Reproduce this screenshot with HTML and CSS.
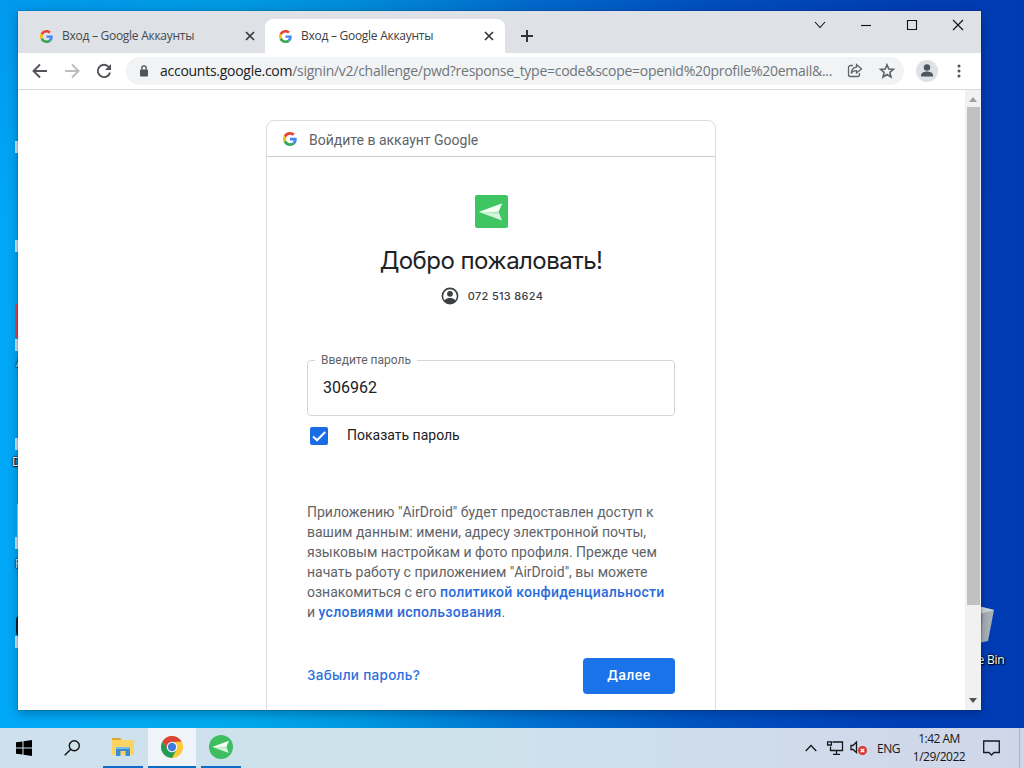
FILE: index.html
```html
<!DOCTYPE html>
<html lang="ru">
<head>
<meta charset="utf-8">
<title>Вход – Google Аккаунты</title>
<link rel="stylesheet" href="styles.css">
</head>
<body>
<svg class="defs" width="0" height="0" aria-hidden="true">
  <symbol id="google" viewBox="0 0 48 48">
    <path fill="#ea4335" d="M24 9.5c3.54 0 6.71 1.22 9.21 3.6l6.85-6.85C35.9 2.38 30.47 0 24 0 14.62 0 6.51 5.38 2.56 13.22l7.98 6.19C12.43 13.72 17.74 9.5 24 9.5z"/>
    <path fill="#4285f4" d="M46.98 24.55c0-1.57-.15-3.09-.38-4.55H24v9.02h12.94c-.58 2.96-2.26 5.48-4.78 7.18l7.73 6c4.51-4.18 7.09-10.36 7.09-17.65z"/>
    <path fill="#fbbc05" d="M10.53 28.59c-.48-1.45-.76-2.99-.76-4.59s.27-3.14.76-4.59l-7.98-6.19C.92 16.46 0 20.12 0 24s.92 7.54 2.56 10.78l7.97-6.19z"/>
    <path fill="#34a853" d="M24 48c6.48 0 11.93-2.13 15.89-5.81l-7.73-6c-2.15 1.45-4.92 2.3-8.16 2.3-6.26 0-11.57-4.22-13.47-9.91l-7.98 6.19C6.51 42.62 14.62 48 24 48z"/>
  </symbol>
  <symbol id="plane" viewBox="0 0 24 24">
    <path fill="#d4f5da" d="M0 12 23 3.500 19.500 11.500 23 20.500z"/>
    <path fill="#f4fff6" d="M0 12 23 3.500 19.500 11.500z"/>
    <path fill="#b4ebc0" d="M4 13 19.500 11.500 20.300 14z"/>
  </symbol>
</svg>
<div class="desktop">
  <div class="shortcut" style="top:141px"></div>
  <div class="shortcut" style="top:240px"></div>
  <div class="shortcut red" style="top:304px"></div>
  <div class="shortcut" style="top:339px"></div>
  <div class="shortcut" style="top:438px"></div>
  <div class="shortcut thin" style="top:504px"></div>
  <div class="shortcut" style="top:537px"></div>
  <div class="shortcut dark" style="top:616px"></div>
  <div class="shortcut" style="top:636px"></div>
  <span class="desk-label" style="left:16px;top:356px">A</span>
  <span class="desk-label" style="left:12px;top:455px">D</span>
  <span class="desk-label" style="left:15px;top:557px">F</span>
  <svg class="bin" width="24" height="44" viewBox="0 0 24 44"><path fill="#a9b3b5" d="M0 3 20 8 14 39 0 42z"/><path fill="#cfd8da" d="M0 3 20 8 9 11 0 9z"/><path fill="#8e999b" d="M0 11 9 12 7 41 0 42z"/></svg>
  <span class="desk-label bin-label">Recycle Bin</span>

  <main class="window">
    <div class="tabstrip">
      <div class="tab">
        <svg class="fav" width="13" height="13"><use href="#google"/></svg>
        <span class="tab-title">Вход – Google Аккаунты</span>
        <svg width="10" height="10" viewBox="0 0 10 10"><path class="close" d="M1 1 9 9M9 1 1 9"/></svg>
      </div>
      <div class="tab active">
        <svg class="fav" width="13" height="13"><use href="#google"/></svg>
        <span class="tab-title">Вход – Google Аккаунты</span>
        <svg width="10" height="10" viewBox="0 0 10 10"><path class="close" d="M1 1 9 9M9 1 1 9"/></svg>
      </div>
      <svg class="plus" width="12" height="12" viewBox="0 0 12 12"><path d="M6 0V12M0 6H12" stroke="#303338" stroke-width="2"/></svg>
      <div class="controls">
        <svg width="12" height="12" viewBox="0 0 12 12"><path d="M1 3 6 8.500 11 3"/></svg>
        <svg width="12" height="12" viewBox="0 0 12 12"><path d="M1 6.500H11"/></svg>
        <svg width="12" height="12" viewBox="0 0 12 12"><path d="M1.500 1.500H10.500V10.500H1.500z"/></svg>
        <svg width="12" height="12" viewBox="0 0 12 12"><path d="M1 1 11 11M11 1 1 11"/></svg>
      </div>
    </div>
    <div class="toolbar">
      <svg class="nav" width="16" height="16" viewBox="0 0 16 16"><path d="M15 8H2M8 1.500 1.500 8 8 14.500"/></svg>
      <svg class="nav disabled" width="16" height="16" viewBox="0 0 16 16"><path d="M1 8H14M8 1.500 14.500 8 8 14.500"/></svg>
      <svg class="nav" width="16" height="16" viewBox="0 0 16 16"><path d="M12.800 4A6.200 6.200 0 1 0 14 9.500"/><path class="solid" d="M15 1V7H9z"/></svg>
      <div class="omnibox">
        <svg width="10" height="12" viewBox="0 0 10 12"><rect x="1" y="4.500" width="8" height="7" rx="1" fill="#505357"/><path d="M2.800 5V3a2.200 2.200 0 0 1 4.400 0V5" fill="none" stroke="#505357" stroke-width="1.300"/></svg>
        <span class="url"><b>accounts.google.com</b>/signin/v2/challenge/pwd?response_type=code&amp;scope=openid%20profile%20email&amp;...</span>
        <svg class="share" width="16" height="16" viewBox="0 0 16 16"><path d="M6 2.500H3.500a2 2 0 0 0-2 2v7a2 2 0 0 0 2 2h7a2 2 0 0 0 2-2V10M9.500 1.500 14.500 6 9.500 10V7.700C7 7.600 5.400 8.500 4.300 10.500 4.500 7 6.300 4.500 9.500 4.200z"/></svg>
        <svg class="star" width="16" height="16" viewBox="0 0 16 16"><path d="M8 1.700 9.800 6 14.400 6.400 10.900 9.400 12 14 8 11.500 4 14 5.100 9.400 1.600 6.400 6.200 6z"/></svg>
      </div>
      <svg class="avatar" width="22" height="22" viewBox="0 0 22 22"><circle cx="11" cy="11" r="11" fill="#dee1e6"/><circle cx="11" cy="7.500" r="3.200" fill="#50555f"/><path d="M5 16.500V15c0-2.500 4-3.500 6-3.500s6 1 6 3.500v1.500z" fill="#50555f"/></svg>
      <svg class="menu" width="4" height="14" viewBox="0 0 4 14" fill="#505357"><circle cx="2" cy="2" r="1.500"/><circle cx="2" cy="7" r="1.500"/><circle cx="2" cy="12" r="1.500"/></svg>
    </div>
    <div class="viewport">
      <section class="card">
        <header class="card-head"><svg width="14" height="14"><use href="#google"/></svg><span>Войдите в аккаунт Google</span></header>
        <div class="card-body">
          <div class="app-icon"><svg width="24" height="24"><use href="#plane"/></svg></div>
          <h1>Добро пожаловать!</h1>
          <div class="account">
            <svg width="18" height="18" viewBox="0 0 18 18"><circle cx="9" cy="9" r="7.600" fill="none" stroke="#3c4043" stroke-width="1.600"/><circle cx="9" cy="6.800" r="2.900" fill="#3c4043"/><path d="M3.300 13.600C5 11.200 7 11 9 11s4 .2 5.700 2.600C13.500 16 11 17 9 17s-4.500-1-5.700-3.400z" fill="#3c4043"/></svg>
            <span>072 513 8624</span>
          </div>
          <div class="field"><span class="label">Введите пароль</span><span class="value">306962</span></div>
          <div class="check"><svg width="18" height="18" viewBox="0 0 18 18"><rect width="18" height="18" rx="2" fill="#1a6be6"/><path d="M3 9.500 7 13.300 15.200 5" fill="none" stroke="#fff" stroke-width="2"/></svg><span>Показать пароль</span></div>
          <p class="terms">Приложению "AirDroid" будет предоставлен доступ к<br>вашим данным: имени, адресу электронной почты,<br>языковым настройкам и фото профиля. Прежде чем<br>начать работу с приложением "AirDroid", вы можете<br>ознакомиться с его <a>политикой конфиденциальности</a><br>и <a>условиями использования</a>.</p>
          <div class="actions"><span class="forgot">Забыли пароль?</span><span class="next">Далее</span></div>
        </div>
      </section>
      <div class="scrollbar">
        <svg width="8" height="5" viewBox="0 0 8 5"><path d="M0 5 4 0 8 5z" fill="#a0a0a0"/></svg>
        <div class="thumb"></div>
        <svg class="down" width="8" height="5" viewBox="0 0 8 5"><path d="M0 0 4 5 8 0z" fill="#505050"/></svg>
      </div>
    </div>
  </main>

  <footer class="taskbar">
    <div class="task"><svg width="16" height="16" viewBox="0 0 16 16"><path d="M0 2.300 6.500 1.400V7.500H0zM7.500 1.200 16 0V7.500H7.500zM0 8.500H6.500V14.600L0 13.700zM7.500 8.500H16V16L7.500 14.800z"/></svg></div>
    <div class="task"><svg width="16" height="16" viewBox="0 0 16 16" fill="none" stroke="#111" stroke-width="1.400"><circle cx="10.300" cy="5.700" r="5"/><path d="M6.800 9.200.7 15.300"/></svg></div>
    <div class="task open files"><svg width="22" height="20" viewBox="0 0 22 20"><path fill="#e3a82a" d="M0 1H8L10 3H0z"/><path fill="#fbd463" d="M0 3H22V18H0z"/><path fill="#3e8ecf" d="M4 10H18V19H13.500V14H8.500V19H4z"/><path fill="#77bdea" d="M4 10H18V12H4z"/></svg></div>
    <div class="task open current"><svg width="22" height="22" viewBox="0 0 22 22"><circle cx="11" cy="11" r="11" fill="#fbc934"/><path fill="#dc4437" d="M1.500 5.500A11 11 0 0 1 20.500 5.500L11 6 6.700 13.500z"/><path fill="#239b56" d="M1.500 5.500A11 11 0 0 0 11 22L15.500 13.500 11 16 6.700 13.500z"/><circle cx="11" cy="11" r="5.200" fill="#fff"/><circle cx="11" cy="11" r="4.200" fill="#3f7ddd"/></svg></div>
    <div class="task open air"><svg width="24" height="24" viewBox="0 0 24 24"><circle cx="12" cy="12" r="12" fill="#3fbd61"/><use href="#plane" x="3.500" y="3.500" width="17" height="17"/></svg></div>
    <div class="tray">
      <svg width="12" height="8" viewBox="0 0 12 8"><path d="M.7 7 6 1.500 11.300 7"/></svg>
      <svg class="net" width="16" height="14" viewBox="0 0 16 14"><path d="M5.500 1H15.500V9.500H3.500V5.500M9.500 10V13M6 13.300H13M.6.800H4.400V4H.6z"/></svg>
      <svg class="snd" width="18" height="16" viewBox="0 0 18 16"><path d="M1 5.500H3L6.500 2V12.500L3 9.500H1z"/><circle cx="12.500" cy="10.500" r="4.500" fill="#d63732"/><path class="mute" d="M10.700 8.700l3.600 3.600m0-3.600-3.600 3.600"/></svg>
      <span class="lang">ENG</span>
      <span class="clock"><span>1:42 AM</span><span>1/29/2022</span></span>
      <svg class="note" width="17" height="16" viewBox="0 0 17 16"><path d="M.7 1H16.300V12.500H11L8.500 15 6 12.500H.7z"/></svg>
    </div>
  </footer>
</div>
</body>
</html>
```
FILE: styles.css
```css
* { box-sizing: border-box; }
body { margin: 0; font-family: Roboto, sans-serif; }
svg { display: block; flex: none; overflow: visible; }
.defs { position: absolute; }
.desktop {
  position: relative; width: 1024px; height: 768px; overflow: hidden;
  display: flex; flex-direction: column; justify-content: space-between;
  background:
    linear-gradient(rgba(0,60,170,.14), rgba(0,110,220,0) 30%, rgba(0,190,240,0) 60%),
    linear-gradient(90deg, #00a8f8 0%, #00aaec 22%, #0098e0 35%, #0070d0 52%, #0050c0 70%, #003eb6 88%, #003bb4 100%);
}
.shortcut { position: absolute; left: 15px; width: 8px; height: 12px; background: #d5e8f8; }
.shortcut.red { height: 34px; background: #e1454c; }
.shortcut.thin { left: 17px; height: 34px; background: #d5e8f8; }
.shortcut.dark { left: 16px; height: 20px; border-radius: 8px; background: #10202c; }
.desk-label { position: absolute; font: 12px/14px "Open Sans", sans-serif; letter-spacing: -.2px; color: #fff; text-shadow: 1px 1px 1px #000, 0 0 2px #000, 0 0 2px #000; }
.bin { position: absolute; left: 974px; top: 602px; }
.bin-label { left: 944px; top: 653px; white-space: nowrap; }

.window {
  position: relative; width: 963px; height: 699px; margin: 11px 0 0 18px;
  display: flex; flex-direction: column; background: #fff;
  box-shadow: 0 0 1px rgba(0,0,0,.6), 0 3px 10px rgba(0,20,60,.35);
}
.tabstrip { height: 42px; flex: none; display: flex; align-items: flex-end; background: #dee1e6; font-family: "Open Sans", sans-serif; }
.tab { width: 247px; height: 34px; display: flex; align-items: center; padding: 0 10px 0 22px; color: #45494d; }
.tab.active { width: 240px; padding: 0 11px 0 14px; border-radius: 8px 8px 0 0; background: #fff; color: #3c4043; }
.fav { margin-right: 9px; }
.tab-title { flex: 1; padding-bottom: 1px; font-size: 12px; letter-spacing: -.27px; white-space: nowrap; }
.close { stroke: #34373b; stroke-width: 1.7; }
.plus { margin: 0 0 11px 16px; }
.controls { margin: 0 17px 0 auto; align-self: flex-start; padding-top: 8px; display: flex; gap: 34px; }
.controls path { fill: none; stroke: #111; stroke-width: 1.1; }

.toolbar { height: 37px; flex: none; display: flex; align-items: center; padding: 0 20px 0 14px; border-bottom: 1px solid #d8dadd; }
.nav { margin-right: 16px; }
.nav path { fill: none; stroke: #505357; stroke-width: 1.9; }
.nav .solid { fill: #505357; stroke: none; }
.nav.disabled path { stroke: #babcbe; }
.omnibox { width: 778px; height: 28px; margin-left: -2px; display: flex; align-items: center; padding: 0 9px 0 13px; border-radius: 14px; background: #f1f3f4; }
.url { width: 689px; margin-left: 11px; font: 14px/20px "Open Sans", sans-serif; letter-spacing: -.27px; color: #70757a; white-space: nowrap; }
.url b { font-weight: 400; color: #202124; }
.share path, .star path { fill: none; stroke: #5f6368; stroke-width: 1.3; }
.share { margin-right: 16px; }
.star path { stroke-width: 1.6; }
.avatar { margin-left: 12px; }
.menu { margin-left: auto; }

.viewport { flex: 1; min-height: 0; display: flex; justify-content: space-between; overflow: hidden; }
.card { width: 450px; height: 660px; margin: 30px 0 0 248px; border: 1px solid #dadce0; border-radius: 8px; }
.card-head { height: 36px; display: flex; align-items: center; gap: 12px; padding: 1px 0 0 16px; border-bottom: 1px solid #c9cbce; font-size: 14px; color: #5f6368; }
.card-head span { padding-top: 2px; }
.card-body { padding: 38px 40px 0; display: flex; flex-direction: column; }
.app-icon { width: 33px; height: 33px; margin: 0 auto; display: flex; align-items: center; justify-content: center; border-radius: 2px; background: #3fc562; }
h1 { margin: 17px 0 0; text-align: center; white-space: nowrap; font: 400 24px/32px Inter, sans-serif; letter-spacing: -.55px; color: #202124; }
.account { margin: 10px 0 0 2px; display: flex; justify-content: center; align-items: center; gap: 9px; font: 500 11px/18px Inter, sans-serif; letter-spacing: .3px; color: #3c4043; }
.field { position: relative; height: 56px; margin-top: 55px; padding: 17px 15px; border: 1px solid #d4d6d9; border-radius: 4px; font-size: 16px; line-height: 20px; color: #202124; }
.label { position: absolute; left: 7px; top: -9px; padding: 0 6px; background: #fff; font-size: 12px; line-height: 16px; color: #5f6368; }
.check { height: 18px; margin: 11px 0 0 3px; display: flex; align-items: center; gap: 19px; font-size: 14px; line-height: 18px; color: #202124; }
.check span { padding-bottom: 2px; }
.terms { margin: 57px -10px 0 0; font-size: 14px; line-height: 20px; color: #5f6368; white-space: nowrap; }
.terms a { font-weight: 500; color: #2a6bdb; letter-spacing: .26px; }
.actions { margin-top: 36px; display: flex; justify-content: space-between; align-items: center; font: 500 13px/20px Inter, sans-serif; }
.forgot { padding-bottom: 2px; font-size: 13.5px; letter-spacing: .3px; color: #2a6fdb; }
.next { width: 92px; height: 36px; line-height: 35px; text-align: center; border-radius: 4px; background: #1a73e8; color: #fff; font-weight: 600; letter-spacing: .45px; }
.scrollbar { width: 16px; display: flex; flex-direction: column; align-items: center; padding: 7px 0; background: #f1f1f1; }
.thumb { width: 13px; height: 498px; margin-top: 5px; background: #c1c1c1; }
.down { margin-top: auto; }

.taskbar { height: 40px; flex: none; position: relative; display: flex; background: linear-gradient(90deg, #cfe0ed, #cde3ec 40%, #d0d6e9); font-family: "Open Sans", sans-serif; }
.taskbar::after { content: ""; position: absolute; right: 4px; top: 0; width: 1px; height: 40px; background: #aab2c6; }
.task { width: 48px; display: flex; align-items: center; justify-content: center; }
.task.open { border-bottom: 2px solid #0b6dc6; }
.files { width: 40px; margin: 0 5px 0 7px; }
.current { background: #eef4fa; }
.air { width: 40px; margin-left: 5px; }
.tray { margin-left: auto; display: flex; align-items: center; padding-right: 24px; color: #15181c; font-size: 12px; }
.tray path { fill: none; stroke: #15181c; stroke-width: 1.3; }
.tray .mute { stroke: #fff; }
.net { margin-left: 10px; }
.snd { margin-left: 7px; }
.lang { margin-left: 9px; letter-spacing: -.5px; }
.clock { width: 58px; margin: 0 15px 0 10px; display: flex; flex-direction: column; align-items: center; line-height: 18px; letter-spacing: -.5px; white-space: nowrap; }
```
